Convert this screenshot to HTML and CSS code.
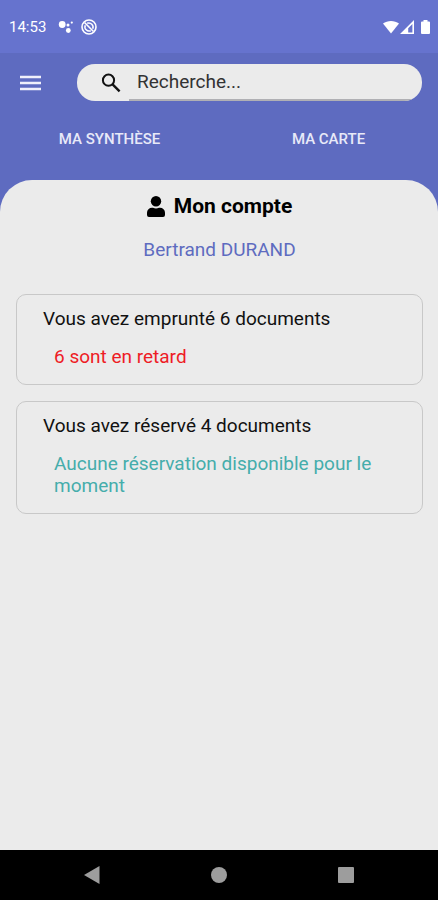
FILE: index.html
```html
<!DOCTYPE html>
<html lang="fr">
<head>
  <meta charset="UTF-8">
  <meta name="viewport" content="width=device-width, initial-scale=1.0">
  <title>Mon compte</title>
  <link rel="stylesheet" href="styles.css">
</head>
<body>
  <div class="status-bar">
    <span class="time">14:53</span>
    <svg class="dots" width="16" height="16" viewBox="0 0 16 16" fill="#fff">
      <circle cx="4.200" cy="5.500" r="3.400"/>
      <circle cx="10.300" cy="11.500" r="2.400"/>
      <circle cx="10" cy="6" r="1.500"/>
      <circle cx="13.800" cy="3.600" r="1.100"/>
    </svg>
    <svg class="privacy" width="18" height="18" viewBox="0 0 18 18" fill="none" stroke="#fff">
      <circle cx="9" cy="9" r="7" stroke-width="1.600"/>
      <path stroke-width="1.500" d="M5.300 7.200a4.200 4.200 0 0 0 5.500 5.500M7.200 5.300a4.200 4.200 0 0 1 5.500 5.500"/>
      <path stroke-width="1.600" d="M4.500 4.500l9 9"/>
    </svg>
    <div class="signals">
      <svg width="16" height="14" viewBox="0 0 16 14" fill="#fff">
        <path d="M0 3.600C4.400 0.200 11.600 0.200 16 3.600L8 13.400z"/>
      </svg>
      <svg width="14" height="14" viewBox="0 0 14 14" fill="#fff">
        <path fill-rule="evenodd" d="M0 14L14 0V14zM8.200 8.200V12.400H12.400V4z"/>
      </svg>
      <svg class="battery" width="9" height="14" viewBox="0 0 9 14" fill="#fff">
        <path d="M2.500 0h4v1.400H8a1 1 0 0 1 1 1V13a1 1 0 0 1-1 1H1a1 1 0 0 1-1-1V2.400a1 1 0 0 1 1-1h1.500z"/>
      </svg>
    </div>
  </div>

  <header class="header">
    <div class="toolbar">
      <button class="menu" aria-label="Menu">
        <svg width="21" height="16" viewBox="0 0 21 16" stroke="#f0f0fb" stroke-width="2.400">
          <path d="M0 2h21M0 8h21M0 14h21"/>
        </svg>
      </button>
      <div class="search">
        <svg width="20" height="20" viewBox="0 0 20 20" fill="none" stroke="#111" stroke-width="2">
          <circle cx="7.500" cy="7.200" r="5.600"/>
          <path stroke-width="2.400" d="M11.600 11.300L18.600 18.300"/>
        </svg>
        <input type="text" placeholder="Recherche..." aria-label="Recherche">
      </div>
    </div>
    <nav class="tabs">
      <a href="#synthese">MA SYNTHÈSE</a>
      <a href="#carte">MA CARTE</a>
    </nav>
  </header>

  <main class="content">
    <h1>
      <svg width="18" height="21" viewBox="0 0 18 21">
        <circle cx="9" cy="5.200" r="5.200"/>
        <path d="M5 11.800h1a7 7 0 0 0 6 0h1a5 5 0 0 1 5 5V19a2 2 0 0 1-2 2H2a2 2 0 0 1-2-2v-2.200a5 5 0 0 1 5-5z"/>
      </svg>
      Mon compte
    </h1>
    <p class="user">Bertrand DURAND</p>

    <section class="card">
      <h2>Vous avez emprunté 6 documents</h2>
      <p class="late">6 sont en retard</p>
    </section>
    <section class="card">
      <h2>Vous avez réservé 4 documents</h2>
      <p class="info">Aucune réservation disponible pour le moment</p>
    </section>
  </main>

  <div class="nav-bar">
    <button aria-label="Retour">
      <svg width="18" height="18" viewBox="0 0 18 18" fill="#9d9d9d"><path d="M1 9L16.500 0V18z"/></svg>
    </button>
    <button aria-label="Accueil">
      <svg width="18" height="18" viewBox="0 0 18 18" fill="#9d9d9d"><circle cx="9" cy="9" r="8"/></svg>
    </button>
    <button aria-label="Applications récentes">
      <svg width="18" height="18" viewBox="0 0 18 18" fill="#9d9d9d"><rect x="1" y="1" width="16" height="16" rx="1"/></svg>
    </button>
  </div>
</body>
</html>
```
FILE: styles.css
```css
* {
  box-sizing: border-box;
}
body {
  margin: 0;
  min-height: 100vh;
  display: flex;
  flex-direction: column;
  font-family: Roboto, sans-serif;
  background: #5e6bc0;
}
button {
  display: flex;
  padding: 0;
  border: none;
  background: none;
  cursor: pointer;
}
.status-bar {
  display: flex;
  align-items: center;
  height: 53px;
  padding: 0 8px 0 9px;
  background: #6673ce;
  color: #fff;
}
.time {
  font-size: 15px;
}
.dots {
  margin-left: 12px;
}
.privacy {
  margin-left: 6px;
}
.signals {
  display: flex;
  gap: 1px;
  margin-left: auto;
}
.battery {
  margin-left: 6px;
}
.toolbar {
  display: flex;
  align-items: center;
  padding: 11px 16px 0 20px;
}
.menu {
  width: 57px;
}
.search {
  flex: 1;
  display: flex;
  align-items: center;
  height: 37px;
  padding-left: 24px;
  border-radius: 18px;
  background: #ebebeb;
  overflow: hidden;
}
.search input {
  flex: 1;
  min-width: 0;
  height: 37px;
  margin-left: 8px;
  padding: 0 8px;
  border: none;
  border-bottom: 2px solid #b0b0b4;
  background: none;
  font-family: inherit;
  font-size: 19px;
  outline: none;
}
.search input::placeholder {
  color: #333;
}
.tabs {
  display: flex;
  height: 79px;
  padding-top: 28px;
}
.tabs a {
  flex: 1;
  text-align: center;
  font-size: 15px;
  line-height: 20px;
  font-weight: 500;
  color: #e8e9f8;
  text-decoration: none;
}
.content {
  flex: 1;
  padding: 12px 15px 16px 16px;
  border-radius: 32px 32px 0 0;
  background: #ebebeb;
}
h1 {
  display: flex;
  justify-content: center;
  align-items: center;
  gap: 9px;
  margin: 0;
  font-size: 21px;
  line-height: 28px;
  font-weight: 700;
}
.user {
  margin: 18px 0 32px;
  text-align: center;
  font-size: 19px;
  line-height: 24px;
  color: #5e6bc0;
}
.card {
  margin-bottom: 16px;
  padding: 12px 26px 16px;
  border: 1px solid #c8c8c8;
  border-radius: 10px;
}
.card h2 {
  margin: 0;
  font-size: 19px;
  line-height: 24px;
  font-weight: 400;
  color: #111;
}
.card p {
  margin: 15px 0 0 11px;
  font-size: 19px;
  line-height: 22px;
}
.card .late {
  color: #ee1c25;
}
.card .info {
  color: #45adab;
}
.nav-bar {
  display: flex;
  justify-content: space-between;
  align-items: center;
  height: 50px;
  padding: 0 83px;
  background: #000;
}
```
